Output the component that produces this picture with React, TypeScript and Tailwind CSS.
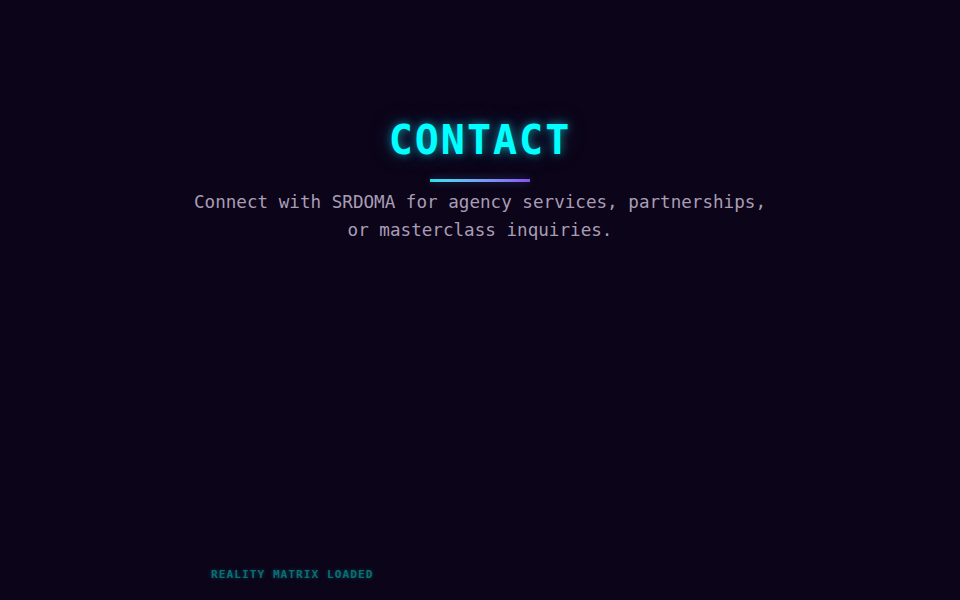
export default function App() {
  return (
    <div className="relative h-[600px] w-[960px] overflow-hidden bg-[#0c0418] font-['DejaVu_Sans_Mono',monospace]">
      <section className="flex flex-col items-center pt-[116px]">
        <h1 className="text-[40px] font-bold leading-[48px] tracking-[0.05em] text-[#00ffff] [text-shadow:0_0_10px_rgba(0,255,255,0.55),0_0_24px_rgba(0,200,255,0.25),3px_0_14px_rgba(255,0,120,0.08)]">
          CONTACT
        </h1>
        <div className="mt-[15px] h-[3px] w-[100px] bg-gradient-to-r from-[#13e4f0] to-[#8a4ff5] shadow-[0_0_8px_rgba(80,160,255,0.35)]" />
        <p className="mt-[6px] max-w-[600px] text-center text-[17.6px] leading-[28.16px] text-[#a99db6]">
          Connect with SRDOMA for agency services, partnerships,
          <br />
          or masterclass inquiries.
        </p>
      </section>
      <div className="absolute bottom-[17px] left-[211px] text-[11.2px] font-bold leading-4 tracking-[1px] text-[#0a6f73] [text-shadow:0_0_4px_rgba(0,200,210,0.35)]">
        REALITY MATRIX LOADED
      </div>
    </div>
  );
}
